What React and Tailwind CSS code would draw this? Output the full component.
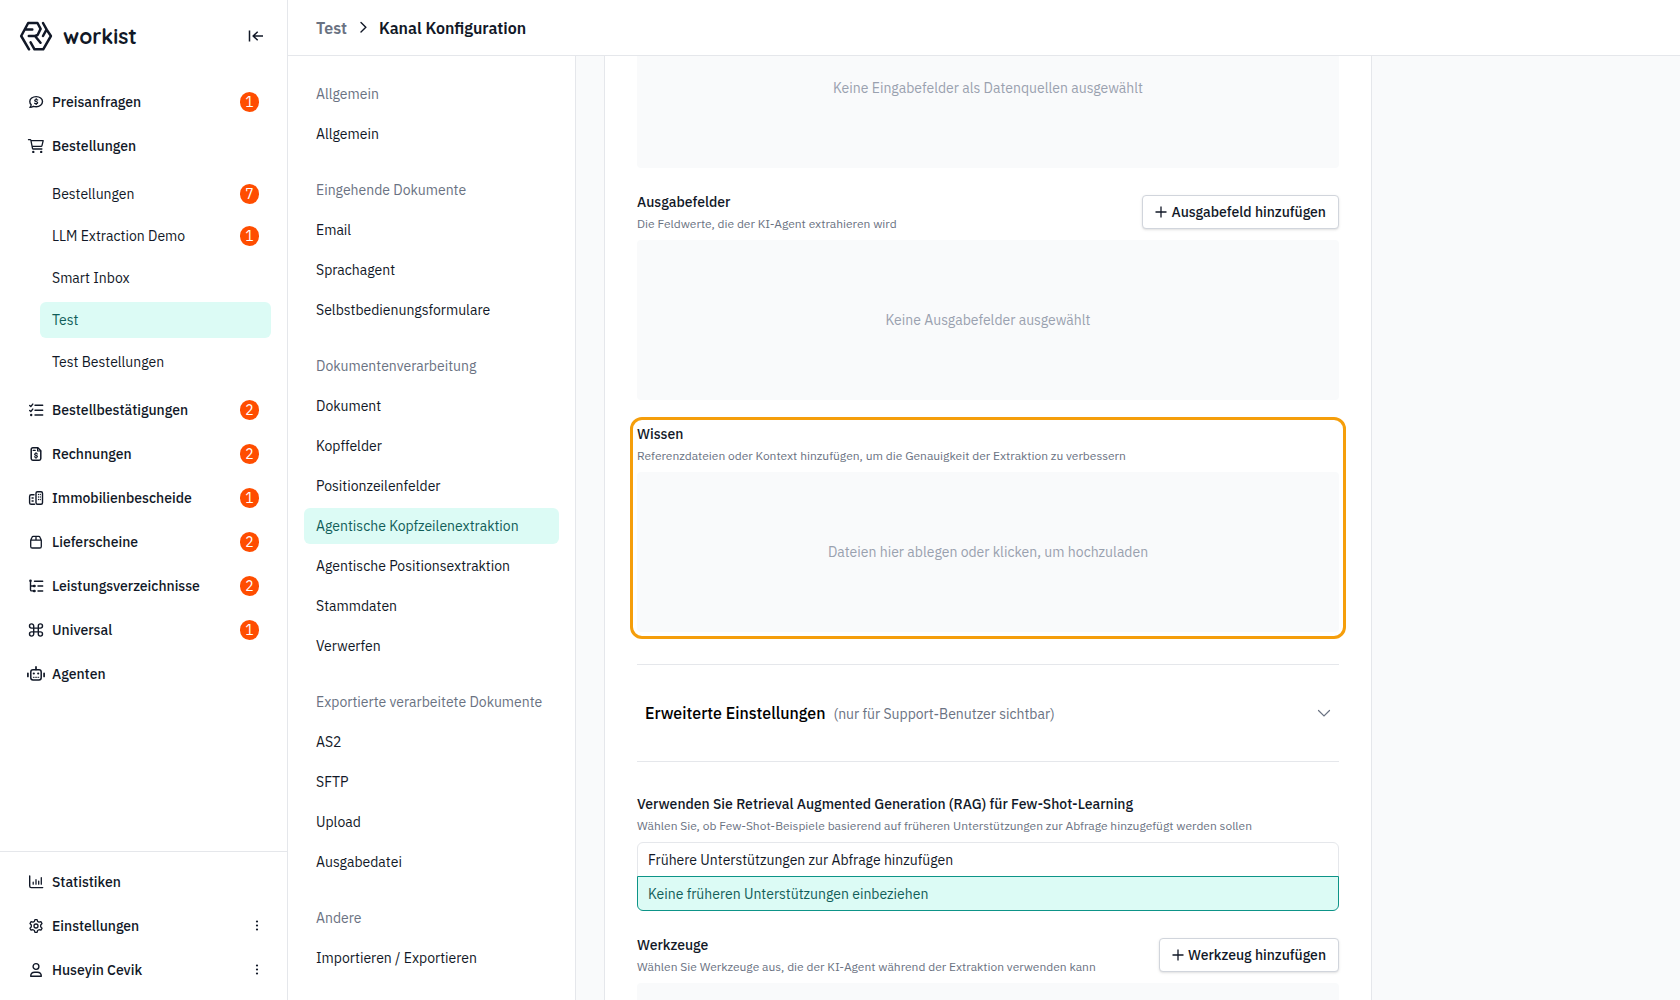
import React from "react";

function Icon({ children }) {
  return (
    <svg
      viewBox="0 0 18 16"
      className="h-4 w-[18px] shrink-0"
      fill="none"
      stroke="currentColor"
      strokeWidth="1.4"
      strokeLinecap="round"
      strokeLinejoin="round"
      aria-hidden="true"
    >
      {children}
    </svg>
  );
}

const icons = {
  quote: (
    <Icon>
      <path d="M9.2 2.6c-3.6 0-6.4 2.2-6.4 5 0 1.300.5 2.400 1.400 3.200-.1 1-.6 1.900-1.300 2.600 1.300 0 2.600-.4 3.500-1.100.9.3 1.800.4 2.800.4 3.500 0 6.300-2.300 6.300-5.100s-2.800-5-6.300-5z" />
      <path d="M10.700 6c-.9-.6-3-.7-3 .5 0 1.400 3 .8 3 2.200 0 1.200-2 1.200-3.100.5M9.200 4.700v.6M9.200 9.700v.7" strokeWidth="1.200" />
    </Icon>
  ),
  cart: (
    <Icon>
      <path d="M1.500 1.700h1.600c.4 0 .7.3.8.700l1.600 7.900c.1.400.4.700.8.700h8.600M4.200 2.700h12l-1.300 5.100c-.1.400-.4.600-.8.600H5.300" strokeWidth="1.300" />
      <circle cx="6.300" cy="13.900" r="1.200" fill="currentColor" stroke="none" />
      <circle cx="14.200" cy="13.900" r="1.200" fill="currentColor" stroke="none" />
    </Icon>
  ),
  checklist: (
    <Icon>
      <path d="M8 3.200h7.700M8 8.200h7.700M8 13h7.700" />
      <path d="M2.700 3.500l1.100 1 2-2.400M2.700 8.500l1.100 1 2-2.400" />
      <circle cx="4.200" cy="13" r="1.200" fill="currentColor" stroke="none" />
    </Icon>
  ),
  invoice: (
    <Icon>
      <path d="M5.800 1.800h5.100l2.900 2.900v7.900c0 .9-.7 1.600-1.600 1.600H5.800c-.9 0-1.600-.7-1.600-1.600V3.400c0-.9.7-1.600 1.600-1.600z" strokeWidth="1.500" />
      <path d="M10.600 2v3h3M6.200 4.400h2" strokeWidth="1.200" />
      <path d="M10.400 7.900c-.9-.6-2.800-.6-2.800.400 0 1.300 2.800.7 2.800 2.100 0 1-1.900 1.100-2.900.4M9 6.700v.7M9 11.600v.6" strokeWidth="1.200" />
    </Icon>
  ),
  buildings: (
    <Icon>
      <rect x="9" y="1.700" width="6.500" height="12.600" rx="1.500" />
      <path d="M7 4.800H4.200c-.9 0-1.600.7-1.600 1.600v6.300c0 .9.7 1.600 1.600 1.600h3.300" />
      <path d="M11.500 4.500h.01M13.300 4.500h.01M11.500 7h.01M13.300 7h.01M11.500 9.500h.01M13.300 9.500h.01M5 8h1.200M5 11h1.200" strokeWidth="1.300" />
    </Icon>
  ),
  box: (
    <Icon>
      <path d="M3.700 6.200v6.200c0 .9.700 1.600 1.600 1.600h7.400c.9 0 1.600-.7 1.600-1.600V6.200zM3.700 6.200l1.300-3c.2-.5.700-.9 1.300-.9h5.400c.6 0 1.100.4 1.300.9l1.300 3M9 2.400v3.800" strokeWidth="1.300" />
    </Icon>
  ),
  tree: (
    <Icon>
      <path d="M7.500 3.200h8.200M11 8h4.700M11 13h4.700" />
      <path d="M3.500 2.700v9c0 .7.500 1.200 1.200 1.200H7M3.500 8H7" />
      <path d="M3.400 2.800h.2M7 8h.6M7 13h.6" strokeWidth="2.400" />
    </Icon>
  ),
  command: (
    <Icon>
      <path d="M6.700 5.700V4a2.100 2.100 0 1 0-2.100 2.100h8.800A2.100 2.100 0 1 0 11.300 4v8a2.100 2.100 0 1 0 2.100-2.100H4.600A2.100 2.100 0 1 0 6.700 12z" />
    </Icon>
  ),
  robot: (
    <Icon>
      <rect x="3.800" y="3.700" width="10.400" height="10.200" rx="2.200" strokeWidth="1.500" />
      <path d="M9 .9v2.600M.9 7.300v3.200M17.100 7.300v3.200" strokeWidth="1.700" />
      <path d="M6.800 7.500h.01M11.200 7.500h.01" strokeWidth="2.200" />
      <path d="M6.300 11.300h.9M8.600 11.300h.9M10.900 11.300h.9" strokeWidth="1" />
    </Icon>
  ),
  stats: (
    <Icon>
      <path d="M2.700 2v10c0 .9.700 1.600 1.600 1.600h11.400" />
      <path d="M6.200 8.200v2M9 5.700v4.500M11.700 7.200v3M14.300 3.700v6.500" strokeWidth="1.300" />
    </Icon>
  ),
  gear: (
    <Icon>
      <path d="M7.900 1.600h2.200l.5 1.800 1.400.8 1.900-.5 1.100 1.900-1.300 1.400v1.900l1.300 1.400-1.100 1.900-1.900-.5-1.400.8-.5 1.900H7.900l-.5-1.900-1.400-.8-1.900.5L3 10.300l1.300-1.400V7L3 5.600l1.100-1.900 1.900.5 1.400-.8z" strokeWidth="1.300" />
      <circle cx="9" cy="8" r="2" strokeWidth="1.300" />
    </Icon>
  ),
  user: (
    <Icon>
      <circle cx="9" cy="4.500" r="2.900" />
      <path d="M3.700 14.200c0-2.300 1.700-4 4-4h2.600c2.300 0 4 1.700 4 4z" />
    </Icon>
  ),
};

function Logo() {
  return (
    <a href="#start" className="flex items-center gap-[10px]">
      <svg
        viewBox="0 0 34 30"
        className="h-[30px] w-[34px]"
        fill="none"
        stroke="currentColor"
        strokeWidth="2.500"
        strokeLinecap="round"
        strokeLinejoin="round"
        aria-hidden="true"
      >
        <path d="M10 28.300L2.200 15 9.200 2h9.300l3.100 5.900-3 6.100-2.600 1 5.500 6.800M6.400 8.500h6.900M9.800 15H16" />
        <path d="M24 2l3.700 6.700L31.900 15l-7.700 13.300h-8.700l-3.900-7M27.500 8.700L24 15" />
      </svg>
      <span className="font-[Quicksand,Nunito,sans-serif] text-[21px] leading-8 font-bold">workist</span>
    </a>
  );
}

function Badge({ count }) {
  return (
    <span className="flex h-5 min-w-[19px] items-center justify-center rounded-full bg-[#ff4d00] text-sm font-normal text-white">
      {count}
    </span>
  );
}

function MainItem({ icon, label, count, menu }) {
  return (
    <div className="flex h-11 items-center pr-7 pl-[27px]">
      <a href={"#" + label} className="flex grow items-center gap-[7px] text-sm font-medium">
        {icons[icon]}
        <span className="grow">{label}</span>
        {count && <Badge count={count} />}
      </a>
      {menu && (
        <button type="button" aria-label={label + " Menü"} className="flex h-5 w-1 items-center justify-center">
          <svg viewBox="0 0 4 12" className="h-3 w-1" fill="currentColor" aria-hidden="true">
            <circle cx="2" cy="1.500" r="1.100" />
            <circle cx="2" cy="5.500" r="1.100" />
            <circle cx="2" cy="9.500" r="1.100" />
          </svg>
        </button>
      )}
    </div>
  );
}

const subItems = [
  ["Bestellungen", 7],
  ["LLM Extraction Demo", 1],
  ["Smart Inbox"],
  ["Test"],
  ["Test Bestellungen"],
];

function Sidebar() {
  return (
    <aside className="flex w-72 shrink-0 flex-col border-r border-gray-200 bg-white">
      <div className="flex h-[72px] shrink-0 items-center justify-between pr-[23px] pl-[19px]">
        <Logo />
        <button type="button" aria-label="Seitenleiste einklappen" className="flex h-6 w-4 items-center">
          <svg viewBox="0 0 16 16" className="size-4" fill="none" stroke="currentColor" strokeWidth="1.500" aria-hidden="true">
            <path d="M1.500 2.500v11M5.200 8H15M9.700 3.700L5.200 8l4.500 4.300" />
          </svg>
        </button>
      </div>
      <nav className="grow pt-2" aria-label="Kanäle">
        <MainItem icon="quote" label="Preisanfragen" count={1} />
        <MainItem icon="cart" label="Bestellungen" />
        <ul className="flex flex-col gap-[6px] py-2 pr-4 pl-10">
          {subItems.map(([label, count]) => (
            <li key={label}>
              <a
                href={"#" + label}
                className={
                  "flex h-9 items-center justify-between rounded-md px-3 text-sm " +
                  (label === "Test" ? "bg-[#dcfbf5] text-[#115e59]" : "")
                }
              >
                {label}
                {count && <Badge count={count} />}
              </a>
            </li>
          ))}
        </ul>
        <MainItem icon="checklist" label="Bestellbestätigungen" count={2} />
        <MainItem icon="invoice" label="Rechnungen" count={2} />
        <MainItem icon="buildings" label="Immobilienbescheide" count={1} />
        <MainItem icon="box" label="Lieferscheine" count={2} />
        <MainItem icon="tree" label="Leistungsverzeichnisse" count={2} />
        <MainItem icon="command" label="Universal" count={1} />
        <MainItem icon="robot" label="Agenten" />
      </nav>
      <div className="border-t border-gray-200 py-2">
        <MainItem icon="stats" label="Statistiken" />
        <MainItem icon="gear" label="Einstellungen" menu />
        <MainItem icon="user" label="Huseyin Cevik" menu />
      </div>
    </aside>
  );
}

const groups = [
  ["Allgemein", ["Allgemein"]],
  ["Eingehende Dokumente", ["Email", "Sprachagent", "Selbstbedienungsformulare"]],
  [
    "Dokumentenverarbeitung",
    [
      "Dokument",
      "Kopffelder",
      "Positionzeilenfelder",
      "Agentische Kopfzeilenextraktion",
      "Agentische Positionsextraktion",
      "Stammdaten",
      "Verwerfen",
    ],
  ],
  ["Exportierte verarbeitete Dokumente", ["AS2", "SFTP", "Upload", "Ausgabedatei"]],
  ["Andere", ["Importieren / Exportieren"]],
];

function SettingsNav() {
  return (
    <nav
      aria-label="Konfiguration"
      className="flex w-72 shrink-0 flex-col gap-5 overflow-hidden border-r border-gray-200 bg-white px-4 pt-5"
    >
      {groups.map(([title, items]) => (
        <section key={title} className="flex flex-col gap-1">
          <h2 className="flex h-9 items-center px-3 text-sm whitespace-nowrap text-gray-500">{title}</h2>
          {items.map((item) => (
            <a
              key={item}
              href={"#" + item}
              className={
                "flex h-9 shrink-0 items-center rounded-md px-3 text-sm " +
                (item === "Agentische Kopfzeilenextraktion" ? "bg-[#dcfbf5] text-[#115e59]" : "")
              }
            >
              {item}
            </a>
          ))}
        </section>
      ))}
    </nav>
  );
}

function FieldHeader({ title, hint, action }) {
  return (
    <div className="mb-2 flex items-center justify-between">
      <div>
        <h3 className="text-sm font-medium">{title}</h3>
        <p className="mt-1 text-xs text-gray-500">{hint}</p>
      </div>
      {action && (
        <button
          type="button"
          className="flex h-[34px] items-center gap-1 rounded-[4px] border border-gray-300 bg-white px-3 text-sm font-medium shadow-sm"
        >
          <svg viewBox="0 0 12 12" className="size-3" stroke="currentColor" strokeWidth="1.300" aria-hidden="true">
            <path d="M6 .5v11M.5 6h11" />
          </svg>
          {action}
        </button>
      )}
    </div>
  );
}

function EmptyBox({ children }) {
  return (
    <div className="flex h-40 items-center justify-center rounded-[4px] bg-gray-50 text-sm text-gray-400">{children}</div>
  );
}

function Option({ label, checked, className }) {
  return (
    <label className={"flex h-[35px] cursor-pointer items-center border px-[10px] text-sm " + className}>
      <input type="radio" name="rag" defaultChecked={checked} className="sr-only" />
      {label}
    </label>
  );
}

function Content() {
  return (
    <main className="grow overflow-hidden bg-gray-50 px-7">
      <div className="-mt-[81px] max-w-3xl border border-gray-200 bg-white p-8">
        <EmptyBox>Keine Eingabefelder als Datenquellen ausgewählt</EmptyBox>
        <section className="mt-6">
          <FieldHeader
            title="Ausgabefelder"
            hint="Die Feldwerte, die der KI-Agent extrahieren wird"
            action="Ausgabefeld hinzufügen"
          />
          <EmptyBox>Keine Ausgabefelder ausgewählt</EmptyBox>
        </section>
        <section className="relative mt-6">
          <div className="pointer-events-none absolute -inset-[7px] rounded-xl border-3 border-[#f59e0b]" />
          <FieldHeader
            title="Wissen"
            hint="Referenzdateien oder Kontext hinzufügen, um die Genauigkeit der Extraktion zu verbessern"
          />
          <EmptyBox>Dateien hier ablegen oder klicken, um hochzuladen</EmptyBox>
        </section>
        <hr className="my-8 border-gray-200" />
        <button type="button" className="flex h-8 w-full items-center gap-2 px-2 text-left">
          <span className="flex grow items-baseline gap-2">
            <span className="text-base font-medium text-black">Erweiterte Einstellungen</span>
            <span className="text-sm text-gray-500">(nur für Support-Benutzer sichtbar)</span>
          </span>
          <svg viewBox="0 0 14 14" className="size-[14px] text-gray-500" fill="none" stroke="currentColor" strokeWidth="1.200" strokeLinecap="round" aria-hidden="true">
            <path d="M1.500 4.500L7 10l5.500-5.500" />
          </svg>
        </button>
        <hr className="my-8 border-gray-200" />
        <fieldset>
          <FieldHeader
            title="Verwenden Sie Retrieval Augmented Generation (RAG) für Few-Shot-Learning"
            hint="Wählen Sie, ob Few-Shot-Beispiele basierend auf früheren Unterstützungen zur Abfrage hinzugefügt werden sollen"
          />
          <Option label="Frühere Unterstützungen zur Abfrage hinzufügen" className="rounded-t-md border-gray-200" />
          <Option
            label="Keine früheren Unterstützungen einbeziehen"
            checked
            className="-mt-px rounded-b-md border-[#0d9488] bg-[#dcfbf5] text-[#115e59]"
          />
        </fieldset>
        <section className="mt-6">
          <FieldHeader
            title="Werkzeuge"
            hint="Wählen Sie Werkzeuge aus, die der KI-Agent während der Extraktion verwenden kann"
            action="Werkzeug hinzufügen"
          />
          <EmptyBox />
        </section>
      </div>
    </main>
  );
}

export default function App() {
  return (
    <div className="flex h-screen bg-white font-['IBM_Plex_Sans',Roboto,sans-serif] text-[#111827]">
      <Sidebar />
      <div className="flex min-w-0 grow flex-col">
        <header className="flex h-14 shrink-0 items-center gap-[10px] border-b border-gray-200 px-7">
          <a href="#Test" className="font-semibold text-gray-500">
            Test
          </a>
          <svg viewBox="0 0 12 14" className="h-[14px] w-3" fill="none" stroke="currentColor" strokeWidth="1.400" strokeLinecap="round" aria-hidden="true">
            <path d="M4 1.500L8.800 6.300 4 11" />
          </svg>
          <h1 className="font-semibold">Kanal Konfiguration</h1>
        </header>
        <div className="flex min-h-0 grow">
          <SettingsNav />
          <Content />
        </div>
      </div>
    </div>
  );
}
